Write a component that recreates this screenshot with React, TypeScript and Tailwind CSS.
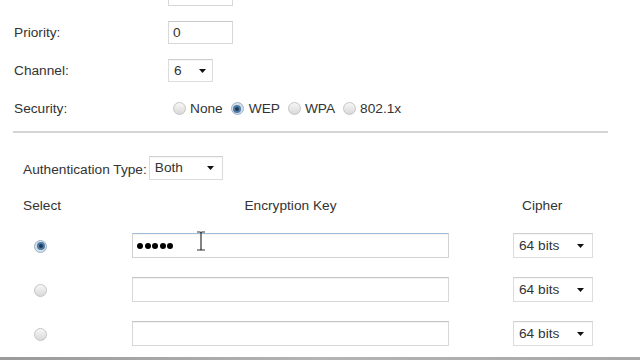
import React from "react";

function Radio({ checked = false }: { checked?: boolean }) {
  if (checked) {
    return (
      <span className="flex h-[13px] w-[13px] shrink-0 items-center justify-center rounded-full border border-[#9fb3c7] bg-[#d3dfea]">
        <span className="flex h-[8px] w-[8px] items-center justify-center rounded-full bg-[#4f7aa3]">
          <span className="block h-[4px] w-[4px] rounded-full bg-[#1e3a5a]" />
        </span>
      </span>
    );
  }
  return (
    <span className="block h-[13px] w-[13px] shrink-0 rounded-full border border-[#c4c4c4] bg-linear-to-b from-[#f7f7f7] to-[#d9d9d9]" />
  );
}

function Arrow() {
  return (
    <svg width="7" height="4" viewBox="0 0 7 4" className="shrink-0">
      <path d="M0 0 H7 L3.5 4 Z" fill="#111" />
    </svg>
  );
}

function Select({ value, w, h = "h-[23px]", pr = "pr-[8px]" }: { value: string; w: string; h?: string; pr?: string }) {
  return (
    <div
      className={`flex ${w} ${h} items-center justify-between border border-[#dcdcdc] border-t-[#cfcfcf] bg-white pl-[5px] ${pr} shadow-[inset_0_1px_1px_rgba(0,0,0,0.04)]`}
    >
      <span>{value}</span>
      <Arrow />
    </div>
  );
}

function TextBox({ children, w, focused = false }: { children?: React.ReactNode; w: string; focused?: boolean }) {
  return (
    <div
      className={`flex ${w} h-[25px] items-center border ${
        focused ? "border-[#d2d2d2] border-t-[#9fbcdb]" : "border-[#d8d8d8] border-t-[#c4c4c4]"
      } bg-white pl-[4px] shadow-[inset_0_1px_1px_rgba(0,0,0,0.05)]`}
    >
      {children}
    </div>
  );
}

export default function App() {
  const labelCls = "w-[154px] shrink-0";
  return (
    <div
      className="relative h-[360px] w-[640px] overflow-hidden bg-white text-[13.7px] leading-[16px] text-[#333]"
      style={{ fontFamily: '"Liberation Sans", Arial, sans-serif' }}
    >
      <div className="flex flex-col gap-[15px] pl-[14px]">
        <div className="mt-[-17px] flex h-[23px] items-center">
          <span className={labelCls}></span>
          <div className="h-[23px] w-[65px] border border-[#d8d8d8] border-t-[#c8c8c8]" />
        </div>
        <div className="flex h-[23px] items-center">
          <span className={labelCls}>Priority:</span>
          <div className="flex h-[23px] w-[65px] items-center border border-[#d8d8d8] border-t-[#c8c8c8] pl-[4px]">0</div>
        </div>
        <div className="flex h-[23px] items-center">
          <span className={labelCls}>Channel:</span>
          <Select value="6" w="w-[45px]" pr="pr-[6px]" />
        </div>
        <div className="flex h-[23px] items-center">
          <span className={labelCls}>Security:</span>
          <div className="flex items-center pl-[5px]">
            <Radio />
            <span className="ml-[4px] mr-[8px]">None</span>
            <Radio checked />
            <span className="ml-[5px] mr-[8px]">WEP</span>
            <Radio />
            <span className="ml-[4px] mr-[8px]">WPA</span>
            <Radio />
            <span className="ml-[4px]">802.1x</span>
          </div>
        </div>
      </div>

      <div className="ml-[13px] mt-[11px] h-[2px] w-[595px] bg-[#d4d4d4]" />

      <div className="ml-[23px] mt-[23px] flex h-[24px] items-center">
        <span className="mr-[2px] mt-[4px]">Authentication Type:</span>
        <Select value="Both" w="w-[74px]" h="h-[24px]" />
      </div>

      <div className="ml-[23px] mt-[18px] grid grid-cols-[109px_317px_64px_80px] items-center">
        <span>Select</span>
        <span className="text-center">Encryption Key</span>
        <span></span>
        <span className="pl-[9px]">Cipher</span>
      </div>

      <div className="ml-[23px] mt-[19px] flex flex-col gap-[19px]">
        {[0, 1, 2].map((i) => (
          <div key={i} className="grid grid-cols-[109px_317px_64px_80px] items-center">
            <div className="flex pl-[11px] pt-[1px]">
              <Radio checked={i === 0} />
            </div>
            <TextBox w="w-[317px]" focused={i === 0}>
              {i === 0 ? (
                <div className="flex gap-[1.5px]">
                  {[0, 1, 2, 3, 4].map((d) => (
                    <span key={d} className="block h-[6px] w-[6px] rounded-full bg-black" />
                  ))}
                </div>
              ) : null}
            </TextBox>
            <span></span>
            <Select value="64 bits" w="w-[80px]" h="h-[25px]" />
          </div>
        ))}
      </div>

      <div className="mt-[11px] h-[3px] w-full bg-linear-to-r from-[#9a9a9a] via-[#b4b4b4] to-[#a8a8a8]" />

      <svg
        className="absolute left-[196px] top-[231px]"
        width="10"
        height="20"
        viewBox="0 0 10 20"
      >
        <path d="M1 1 H4 Q5 1 5 2 V18 Q5 19 4 19 H1 M9 1 H6 Q5 1 5 2 M5 18 Q5 19 6 19 H9" fill="none" stroke="#333" strokeWidth="1.2" />
      </svg>
    </div>
  );
}
